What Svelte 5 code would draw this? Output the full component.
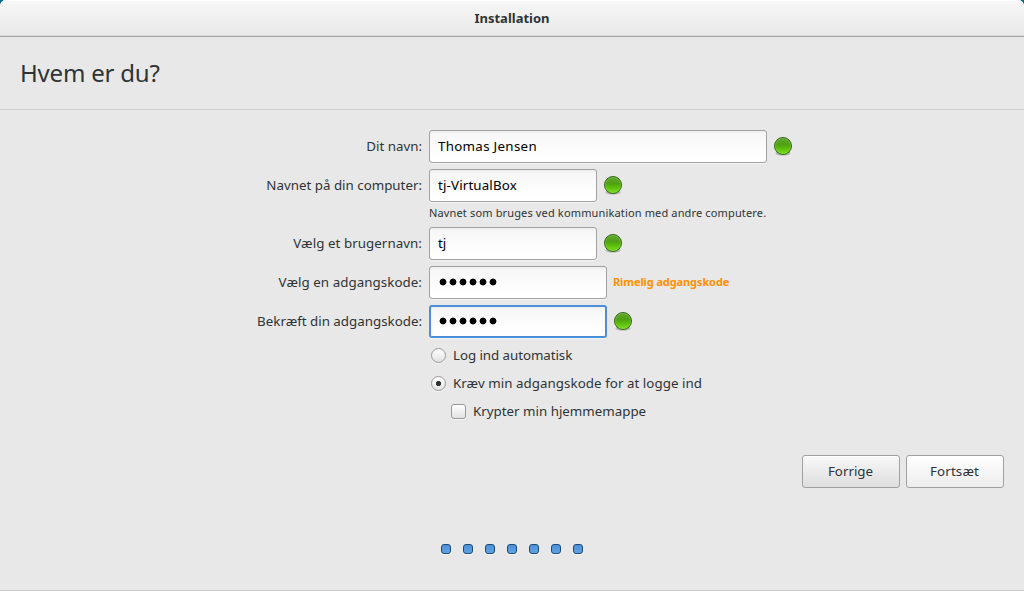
<script>
  const steps = Array.from({ length: 7 });
  const bullets = Array.from({ length: 6 });
</script>

{#snippet ok()}
  <svg class="ok" width="20" height="20" viewBox="0 0 20 20">
    <defs>
      <linearGradient id="orb" x1="0" y1="0" x2="0" y2="1">
        <stop offset="0" stop-color="#62a636" />
        <stop offset=".42" stop-color="#50a012" />
        <stop offset=".6" stop-color="#58b80a" />
        <stop offset="1" stop-color="#80e41c" />
      </linearGradient>
    </defs>
    <ellipse cx="10" cy="17.2" rx="7.5" ry="2.4" fill="#000" opacity=".22" />
    <circle cx="10" cy="10" r="8.5" fill="url(#orb)" stroke="#35651a" />
    <circle cx="10" cy="10" r="7.5" fill="none" stroke="#8fdc55" stroke-opacity=".4" />
  </svg>
{/snippet}

<div class="backdrop">
  <main class="window">
    <header class="titlebar"><span>Installation</span></header>
    <section class="heading"><h1>Hvem er du?</h1></section>

    <form class="form">
      <div class="row">
        <label class="l1" for="name">Dit navn:</label>
        <div class="entry wide" id="name"><span class="v1">Thomas Jensen</span></div>
        {@render ok()}
      </div>
      <div class="row">
        <label class="l2" for="host">Navnet på din computer:</label>
        <div class="entry short" id="host"><span class="v2">tj-VirtualBox</span></div>
        {@render ok()}
      </div>
      <div class="hint"><span>Navnet som bruges ved kommunikation med andre computere.</span></div>
      <div class="row">
        <label class="l3" for="user">Vælg et brugernavn:</label>
        <div class="entry short" id="user"><span>tj</span></div>
        {@render ok()}
      </div>
      <div class="row">
        <label class="l4" for="pass">Vælg en adgangskode:</label>
        <div class="entry secret" id="pass">{#each bullets as _}<i></i>{/each}</div>
        <span class="strength">Rimelig adgangskode</span>
      </div>
      <div class="row">
        <label class="l5" for="again">Bekræft din adgangskode:</label>
        <div class="entry secret focused" id="again">{#each bullets as _}<i></i>{/each}</div>
        {@render ok()}
      </div>
      <div class="options">
        <div class="option"><b class="radio"></b><span class="o1">Log ind automatisk</span></div>
        <div class="option"><b class="radio on"></b><span class="o2">Kræv min adgangskode for at logge ind</span></div>
        <div class="option nested"><b class="check"></b><span>Krypter min hjemmemappe</span></div>
      </div>
    </form>

    <div class="actions">
      <button type="button">Forrige</button>
      <button type="button" class="light">Fortsæt</button>
    </div>

    <div class="steps">{#each steps as _}<i></i>{/each}</div>
  </main>
</div>

<style>
  :global(body) { margin: 0; overflow: hidden; }
  .backdrop { background: #0c6885; height: 591px; }
  .window {
    box-sizing: border-box;
    height: 591px;
    display: flex;
    flex-direction: column;
    background: #e8e8e8;
    border-bottom: 1px solid #cbcbcb;
    border-radius: 6px 6px 0 0;
    overflow: hidden;
    color: #2e3436;
    font: 13.33px/20px "Noto Sans", sans-serif;
    white-space: nowrap;
  }
  .titlebar {
    box-sizing: border-box;
    height: 37px;
    flex: none;
    display: flex;
    align-items: center;
    justify-content: center;
    padding-bottom: 1px;
    background: linear-gradient(#f7f7f7, #e9e9e9);
    border-bottom: 1px solid #a1a1a1;
    box-shadow: inset 0 1px #fff, inset 0 -1px #dadada;
    font-weight: 700;
    font-size: 13px;
  }
  .heading {
    box-sizing: border-box;
    height: 73px;
    flex: none;
    display: flex;
    align-items: center;
    padding-left: 20px;
    border-bottom: 1px solid #cfcfcf;
  }
  h1 { margin: 0; font-size: 24px; line-height: 36px; font-weight: 400; letter-spacing: -.2px; }
  .form { display: flex; flex-direction: column; gap: 6px; padding-top: 20px; }
  .row { display: flex; align-items: center; height: 33px; }
  .row label { width: 422px; margin-right: 7px; padding-bottom: 2px; text-align: right; }
  .l3 { letter-spacing: .06px; }
  .l4 { letter-spacing: .06px; }
  .v1 { letter-spacing: .3px; }
  .v2 { letter-spacing: .15px; }
  .o1 { letter-spacing: -.06px; }
  .o2 { letter-spacing: .05px; }
  .entry {
    box-sizing: border-box;
    height: 33px;
    display: flex;
    align-items: center;
    padding: 0 0 2px 8px;
    border: 1px solid #a1a1a1;
    border-radius: 3px;
    background: linear-gradient(#ededed, #f7f7f7 3px, #fff 85%);
    box-shadow: 0 1px #f4f4f4;
    color: #000;
  }
  .wide { width: 338px; }
  .short { width: 168px; }
  .secret { width: 178px; gap: 2px; padding-left: 9px; }
  .secret i { width: 8px; height: 8px; display: block; background: radial-gradient(circle, #000 3px, transparent 3.8px); }
  .focused { border: 2px solid #4a90d9; padding-left: 8px; }
  .ok { margin: 0 0 2px 6px; display: block; }
  .hint { height: 13px; margin-left: 429px; font-size: 11px; line-height: 9px; letter-spacing: .147px; }
  .strength { margin-left: 6px; padding-bottom: 2px; color: #ff9000; font-size: 11px; font-weight: 700; letter-spacing: -.1px; }
  .options { display: flex; flex-direction: column; gap: 8px; padding: 1px 0 0 431px; }
  .option { display: flex; align-items: center; height: 20px; gap: 7px; }
  .nested { margin-left: 20px; }
  .radio, .check {
    box-sizing: border-box;
    width: 15px;
    height: 15px;
    border: 1px solid #999;
    background: linear-gradient(#fff, #e2e2e2);
    box-shadow: 0 1px #f5f5f5;
  }
  .radio { border-radius: 50%; }
  .check { border-radius: 3px; }
  .on { background: radial-gradient(circle, #2e3436 2.2px, transparent 3px), linear-gradient(#fff, #e2e2e2); }
  .actions { display: flex; justify-content: flex-end; gap: 6px; padding-right: 20px; margin-top: 34px; }
  button {
    width: 98px;
    height: 33px;
    padding: 0 1px 2px 0;
    border: 1px solid #a1a1a1;
    border-radius: 3px;
    background: linear-gradient(#f8f8f8, #dedede);
    box-shadow: inset 0 1px #fff;
    color: inherit;
    font: inherit;
  }
  .light { background: linear-gradient(#fff, #ededed); letter-spacing: .15px; }
  .steps { display: flex; justify-content: center; gap: 12px; margin-top: 56px; }
  .steps i {
    box-sizing: border-box;
    width: 10px;
    height: 10px;
    border: 1px solid #1d4a78;
    border-radius: 3px;
    background: linear-gradient(#4a90d9, #62a2e3);
    box-shadow: 0 1px #f8f8f8;
  }
</style>
